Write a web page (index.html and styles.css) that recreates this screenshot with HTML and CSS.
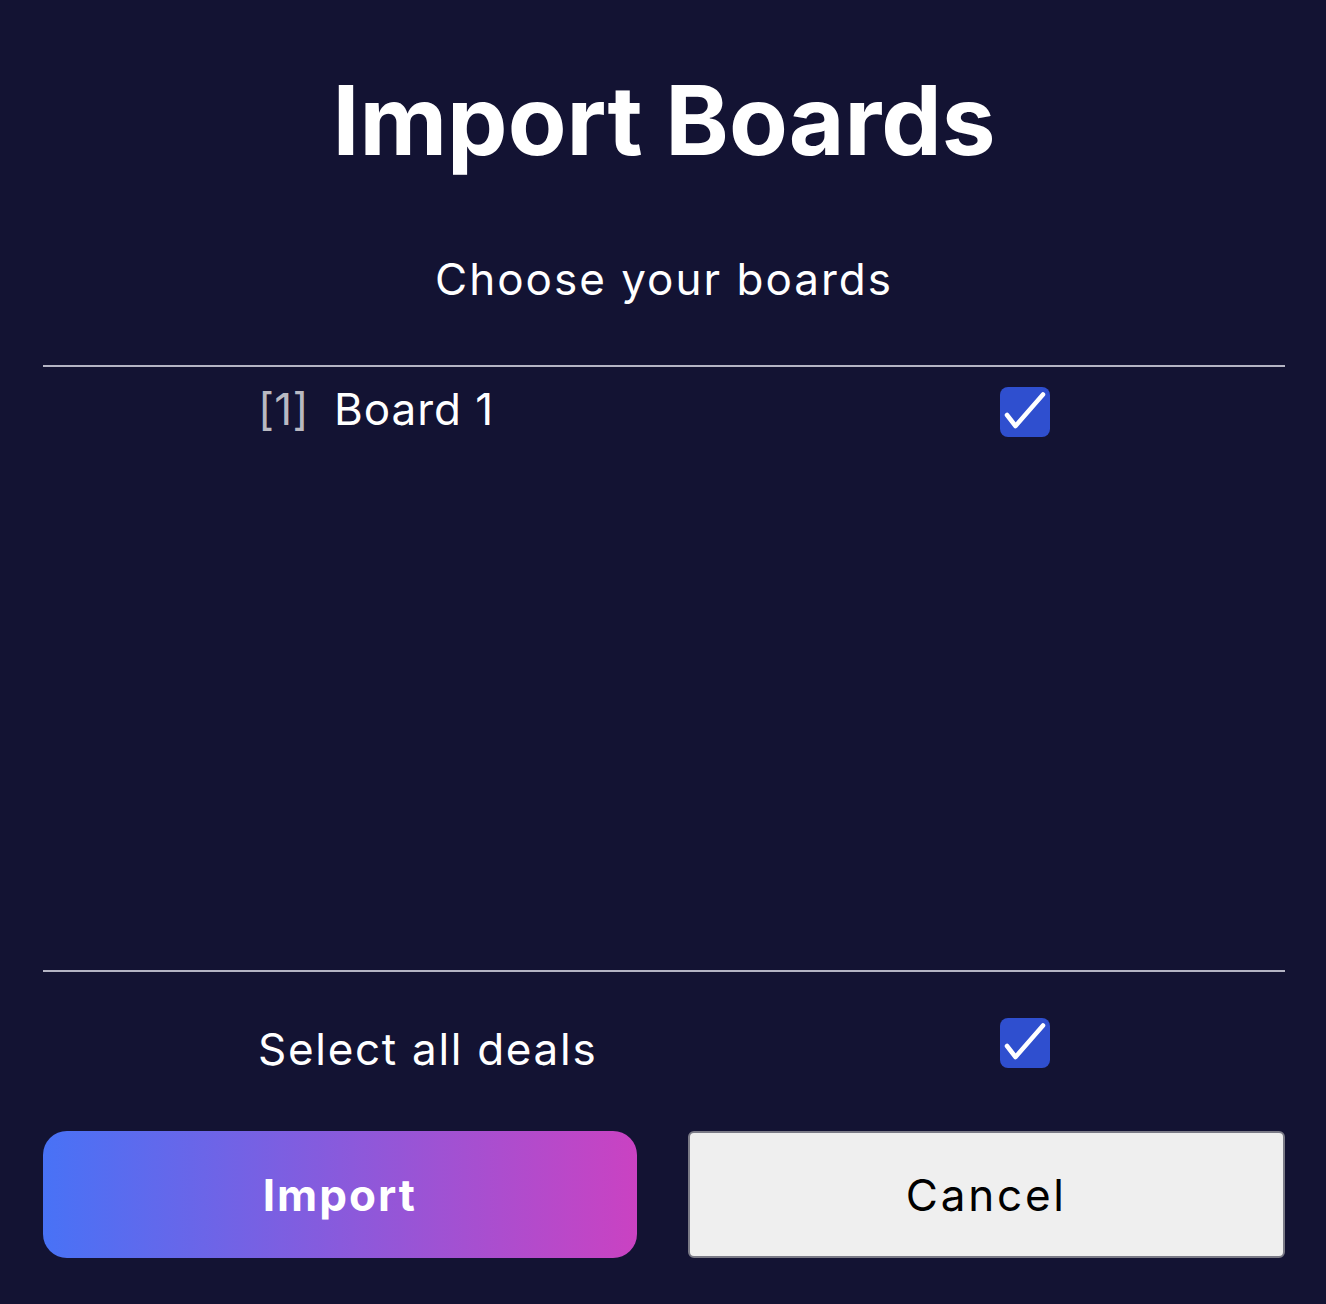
FILE: index.html
```html
<!DOCTYPE html>
<html lang="en">
<head>
<meta charset="utf-8">
<title>Import Boards</title>
<link rel="stylesheet" href="styles.css">
</head>
<body>
<div class="dialog">
  <h1 class="title">Import Boards</h1>
  <p class="subtitle">Choose your boards</p>
  <div class="list">
    <div class="row board-row">
      <div class="label"><span class="index">[1]</span><span class="name">Board 1</span></div>
      <span class="check"><svg viewBox="0 0 50 50" width="50" height="50"><path d="M7 28 L15.5 39 L43 7.5" fill="none" stroke="#fff" stroke-width="4.5" stroke-linecap="round" stroke-linejoin="round"/></svg></span>
    </div>
  </div>
  <div class="row select-row">
    <span class="label select-label">Select all deals</span>
    <span class="check"><svg viewBox="0 0 50 50" width="50" height="50"><path d="M7 28 L15.5 39 L43 7.5" fill="none" stroke="#fff" stroke-width="4.5" stroke-linecap="round" stroke-linejoin="round"/></svg></span>
  </div>
  <div class="actions">
    <button class="btn btn-import">Import</button>
    <button class="btn btn-cancel">Cancel</button>
  </div>
</div>
</body>
</html>
```
FILE: styles.css
```css
html, body {
  margin: 0;
  padding: 0;
  background: #131333;
}
body {
  font-family: Inter, "Noto Sans", sans-serif;
  color: #fff;
}
.dialog {
  padding: 60px 41px 0 43px;
  display: flex;
  flex-direction: column;
}
.title {
  margin: 0;
  font-size: 96px;
  line-height: 120px;
  font-weight: 700;
  text-align: center;
}
.subtitle {
  margin: 69px 0 0;
  font-size: 44px;
  line-height: 60px;
  font-weight: 400;
  letter-spacing: 2px;
  text-align: center;
}
.list {
  margin-top: 56px;
  height: 603px;
  border-top: 2px solid #b4b4c4;
  border-bottom: 2px solid #b4b4c4;
}
.row {
  display: flex;
  align-items: flex-start;
  justify-content: space-between;
  height: 50px;
  padding: 0 235px 0 215px;
}
.board-row {
  margin-top: 20px;
}
.label {
  display: flex;
  font-size: 44px;
  line-height: 50px;
  letter-spacing: 1.8px;
}
.board-row .label {
  margin-top: -3px;
}
.index {
  color: #b9b9c2;
  margin-right: 25px;
  letter-spacing: 0.3px;
}
.name {
  letter-spacing: 1px;
}
.check {
  width: 50px;
  height: 50px;
  border-radius: 8px;
  background: #2f4fcf;
  display: block;
  flex: none;
}
.check svg { display: block; }
.select-row {
  margin-top: 46px;
}
.select-label {
  margin-top: 6px;
  letter-spacing: 1.7px;
}
.actions {
  margin-top: 63px;
  display: flex;
  gap: 51px;
}
.btn {
  flex: 1;
  height: 127px;
  font-size: 44px;
  font-family: inherit;
  cursor: pointer;
  padding: 0;
}
.btn-import {
  border: none;
  border-radius: 24px;
  background: linear-gradient(90deg, #4872f6, #ca42c2);
  color: #fff;
  font-weight: 700;
  letter-spacing: 2px;
}
.btn-cancel {
  border: 2px solid #7a7a86;
  border-radius: 6px;
  background: #efefef;
  color: #000;
  font-weight: 400;
  letter-spacing: 2.8px;
}
```
